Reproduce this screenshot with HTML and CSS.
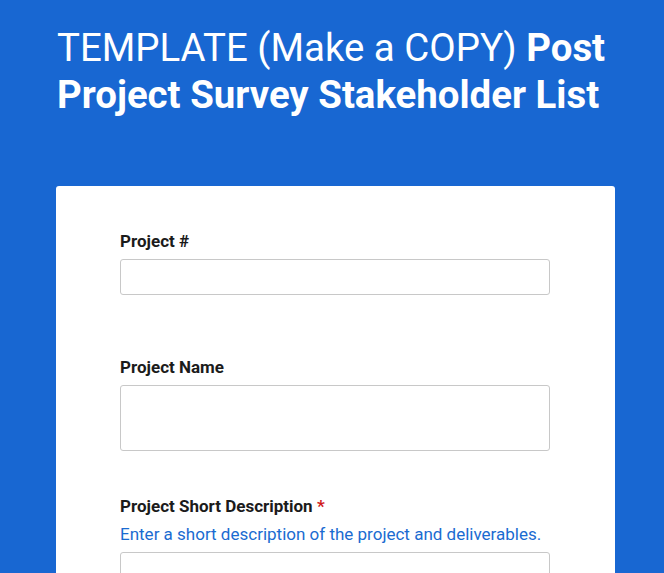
FILE: index.html
```html
<!DOCTYPE html>
<html>
<head>
<meta charset="utf-8">
<link rel="stylesheet" href="styles.css">
</head>
<body>
<div class="page">
  <header class="head">
    <h1 class="title">TEMPLATE (Make a COPY) <b>Post Project Survey Stakeholder List</b></h1>
  </header>
  <main class="card">
    <div class="field first">
      <label class="label">Project #</label>
      <div class="input"></div>
    </div>
    <div class="field second">
      <label class="label">Project Name</label>
      <div class="input tall"></div>
    </div>
    <div class="field">
      <label class="label">Project Short Description <span class="req">*</span></label>
      <div class="hint">Enter a short description of the project and deliverables.</div>
      <div class="input tall"></div>
    </div>
  </main>
</div>
</body>
</html>
```

FILE: styles.css
```css
* { box-sizing: border-box; }
html, body { margin: 0; padding: 0; }
body {
  background: #1867d2;
  font-family: Roboto, "Liberation Sans", sans-serif;
  width: 664px;
  height: 573px;
  overflow: hidden;
}
.page {
  padding: 0 49px 0 56px;
}
.head {
  padding: 24px 0 0 1px;
  height: 186px;
}
.title {
  margin: 0;
  font-size: 38.4px;
  font-weight: 400;
  line-height: 47px;
  color: #ffffff;
}
.title b { font-weight: 700; }
.card {
  background: #ffffff;
  border-radius: 3px 3px 0 0;
  padding: 44px 65px 40px 64px;
  min-height: 600px;
}
.field {
  display: flex;
  flex-direction: column;
  margin-bottom: 44px;
}
.field.first { margin-bottom: 61px; }
.label {
  font-size: 17px;
  font-weight: 700;
  color: #1b1b1b;
  line-height: 22px;
  margin-bottom: 7px;
}
.req { color: #d01a1a; }
.hint {
  font-size: 17px;
  color: #1a6bd1;
  line-height: 22px;
  margin-top: -1px;
  margin-bottom: 7px;
}
.input {
  height: 36px;
  border: 1px solid #c8c8c8;
  border-radius: 3px;
  background: #fff;
}
.input.tall { height: 66px; }
```
